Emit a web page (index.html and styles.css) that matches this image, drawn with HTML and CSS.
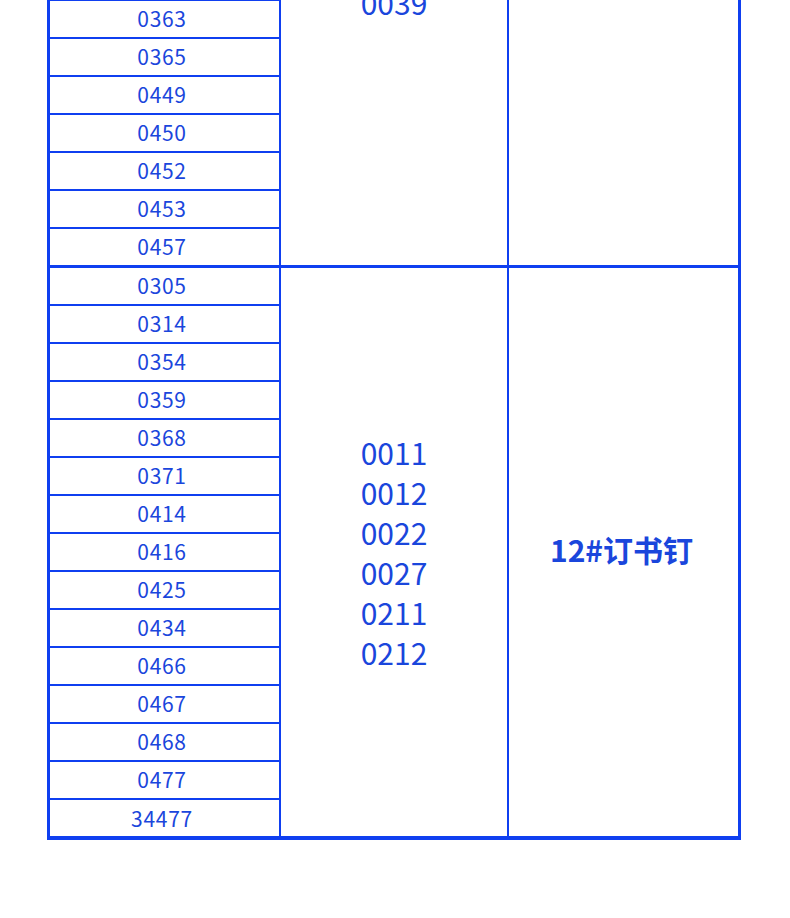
FILE: index.html
```html
<!DOCTYPE html>
<html lang="zh">
<head>
<meta charset="utf-8">
<title>订书钉适配型号</title>
<link rel="stylesheet" href="styles.css">
</head>
<body>
<div class="table">
  <div class="group">
    <div class="col-models">
      <div class="row"></div>
      <div class="row"></div>
      <div class="row"></div>
      <div class="row"></div>
      <div class="row"></div>
      <div class="row"></div>
      <div class="row"></div>
      <div class="row"></div>
      <div class="row"></div>
      <div class="row">0363</div>
      <div class="row">0365</div>
      <div class="row">0449</div>
      <div class="row">0450</div>
      <div class="row">0452</div>
      <div class="row">0453</div>
      <div class="row">0457</div>
    </div>
    <div class="col-codes">
      <div class="code">&nbsp;</div>
      <div class="code">&nbsp;</div>
      <div class="code">0039</div>
    </div>
    <div class="col-name"></div>
  </div>
  <div class="group">
    <div class="col-models">
      <div class="row">0305</div>
      <div class="row">0314</div>
      <div class="row">0354</div>
      <div class="row">0359</div>
      <div class="row">0368</div>
      <div class="row">0371</div>
      <div class="row">0414</div>
      <div class="row">0416</div>
      <div class="row">0425</div>
      <div class="row">0434</div>
      <div class="row">0466</div>
      <div class="row">0467</div>
      <div class="row">0468</div>
      <div class="row">0477</div>
      <div class="row">34477</div>
    </div>
    <div class="col-codes">
      <div class="code">0011</div>
      <div class="code">0012</div>
      <div class="code">0022</div>
      <div class="code">0027</div>
      <div class="code">0211</div>
      <div class="code">0212</div>
    </div>
    <div class="col-name">12#订书钉</div>
  </div>
</div>
</body>
</html>
```

FILE: styles.css
```css
html, body {
  margin: 0;
  padding: 0;
  background: #ffffff;
}

body {
  font-family: "Noto Sans CJK SC", "Noto Sans", sans-serif;
  color: #1a46dc;
}

.table {
  width: 688px;
  margin: -344px 0 0 47px;
  border: 3px solid #0f3ff0;
  border-bottom-width: 4px;
}

.group {
  display: flex;
}

.group + .group {
  border-top: 3px solid #0f3ff0;
}

.col-models {
  width: 229px;
  border-right: 2px solid #0f3ff0;
  display: flex;
  flex-direction: column;
}

.row {
  height: 35px;
  display: flex;
  align-items: center;
  justify-content: center;
  font-size: 21px;
  line-height: 1;
  letter-spacing: 0.7px;
  padding: 0 5px 1px 0;
}

.row + .row {
  border-top: 2px solid #0f3ff0;
}

.group:last-child .row:last-child {
  height: 36px;
  padding-bottom: 0;
}

.col-codes {
  width: 226px;
  border-right: 2px solid #0f3ff0;
  display: flex;
  flex-direction: column;
  justify-content: center;
  align-items: center;
}

.code {
  font-size: 30px;
  line-height: 40px;
}

.col-name {
  flex: 1;
  display: flex;
  align-items: center;
  justify-content: center;
  font-size: 30px;
  font-weight: 700;
  padding: 0 4px 6px 0;
}
```
